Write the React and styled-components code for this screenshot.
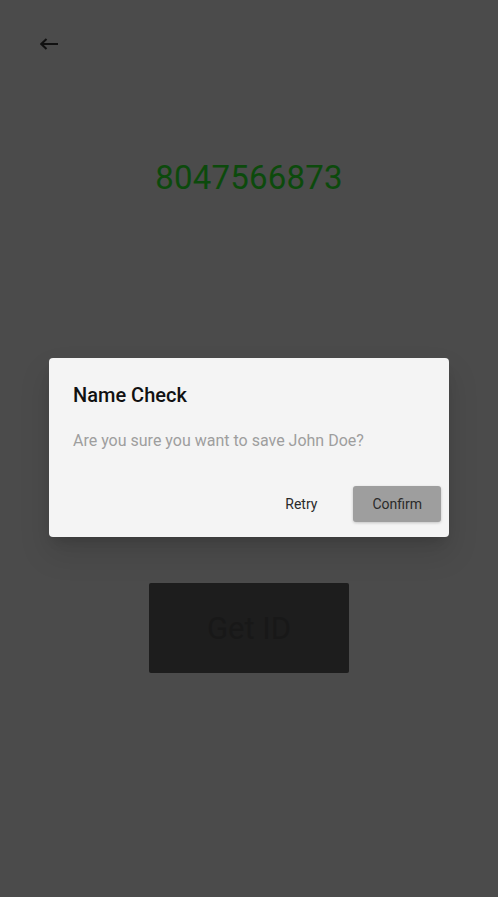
import React from "react";
import styled, { createGlobalStyle } from "styled-components";

const Global = createGlobalStyle`
  html, body { margin: 0; padding: 0; background: #4b4b4b; }
  body { font-family: Roboto, "Liberation Sans", sans-serif; }
  #root { min-height: 100vh; }
`;

const Page = styled.div`
  position: relative;
  width: 498px;
  height: 897px;
  background: #4b4b4b;
  display: flex;
  flex-direction: column;
  align-items: center;
  overflow: hidden;
`;

const TopBar = styled.div`
  align-self: stretch;
  height: 88px;
  display: flex;
  align-items: center;
  padding-left: 40px;
  box-sizing: border-box;
`;

const BackButton = styled.button`
  border: none;
  background: none;
  padding: 0;
  width: 18px;
  height: 12px;
  display: flex;
  cursor: pointer;
`;

const Number = styled.div`
  margin-top: 66px;
  font-size: 33px;
  line-height: 48px;
  color: #0c4a0c;
  letter-spacing: 0.2px;
`;

const GetId = styled.button`
  margin-top: 381px;
  width: 200px;
  height: 90px;
  border: none;
  border-radius: 2px;
  background: #1d1d1d;
  color: #181818;
  font-family: Roboto, "Liberation Sans", sans-serif;
  font-size: 31px;
`;

const Backdrop = styled.div`
  position: absolute;
  inset: 0;
  display: flex;
  justify-content: center;
  align-items: flex-start;
  padding-top: 358px;
`;

const Dialog = styled.div`
  width: 400px;
  height: 179px;
  box-sizing: border-box;
  background: #f4f4f4;
  border-radius: 4px;
  box-shadow: 0 8px 12px -6px rgba(0,0,0,0.18), 0 16px 30px 2px rgba(0,0,0,0.1);
  display: flex;
  flex-direction: column;
`;

const Title = styled.h2`
  margin: 0;
  padding: 22px 24px 0;
  font-size: 20px;
  font-weight: 500;
  line-height: 30px;
  color: #111;
`;

const Body = styled.p`
  margin: 0;
  padding: 19px 24px 0;
  font-size: 16px;
  line-height: 24px;
  color: #9e9e9e;
`;

const Actions = styled.div`
  margin-top: auto;
  padding: 0 8px 15px;
  display: flex;
  justify-content: flex-end;
  gap: 20px;
`;

const ActionButton = styled.button`
  height: 36px;
  min-width: 64px;
  padding: 0 ${p => (p.$filled ? "19px" : "16px")};
  border: none;
  border-radius: 3px;
  background: ${p => (p.$filled ? "#9e9e9e" : "transparent")};
  box-shadow: ${p => (p.$filled ? "0 1px 3px rgba(0,0,0,0.2)" : "none")};
  color: #2a2a2a;
  font-family: Roboto, "Liberation Sans", sans-serif;
  font-size: 14px;
  cursor: pointer;
`;

export default function App() {
  return (
    <>
      <Global />
      <Page>
        <TopBar>
          <BackButton aria-label="back">
            <svg width="18" height="12" viewBox="0 0 18 12" fill="none">
              <path d="M18 6H1.5M6.5 1L1.3 6l5.2 5" stroke="#111" strokeWidth="2" />
            </svg>
          </BackButton>
        </TopBar>
        <Number>8047566873</Number>
        <GetId>Get ID</GetId>
        <Backdrop>
          <Dialog>
            <Title>Name Check</Title>
            <Body>Are you sure you want to save John Doe?</Body>
            <Actions>
              <ActionButton>Retry</ActionButton>
              <ActionButton $filled>Confirm</ActionButton>
            </Actions>
          </Dialog>
        </Backdrop>
      </Page>
    </>
  );
}
